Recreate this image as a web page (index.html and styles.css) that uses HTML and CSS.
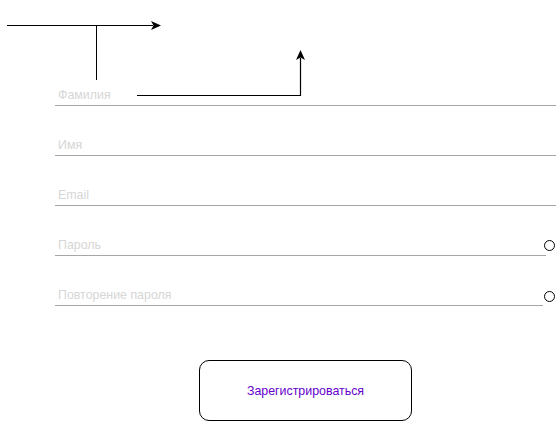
FILE: index.html
```html
<!DOCTYPE html>
<html lang="ru">
<head>
<meta charset="utf-8">
<title>Регистрация</title>
<link rel="stylesheet" href="styles.css">
</head>
<body>
<svg class="connectors" width="557" height="421" viewBox="0 0 557 421">
  <path d="M7 25.5 H153" stroke="#000" stroke-width="1.2" fill="none"/>
  <path d="M161 25.5 L151 21 L153.5 25.5 L151 30 Z" fill="#000"/>
  <path d="M96.5 25.5 V80" stroke="#000" stroke-width="1" fill="none"/>
  <path d="M137 95.5 H300.5 V58" stroke="#000" stroke-width="1.2" fill="none"/>
  <path d="M300.5 50 L296 60 L300.5 57.5 L305 60 Z" fill="#000"/>
</svg>
<form class="form">
  <div class="field"><span class="label">Фамилия</span></div>
  <div class="field"><span class="label">Имя</span></div>
  <div class="field"><span class="label">Email</span></div>
  <div class="row">
    <div class="field field-pass"><span class="label">Пароль</span></div>
    <span class="dot dot-1"></span>
  </div>
  <div class="row">
    <div class="field field-repeat"><span class="label">Повторение пароля</span></div>
    <span class="dot dot-2"></span>
  </div>
  <div class="actions">
    <button type="button" class="btn">Зарегистрироваться</button>
  </div>
</form>
</body>
</html>
```
FILE: styles.css
```css
html, body {
  margin: 0;
  padding: 0;
  background: #fff;
  font-family: "Liberation Sans", Arial, sans-serif;
}
body {
  width: 557px;
  height: 421px;
  position: relative;
  overflow: hidden;
}
.connectors {
  position: absolute;
  left: 0;
  top: 0;
  pointer-events: none;
}
.form {
  padding-top: 56px;
  padding-left: 55px;
  display: flex;
  flex-direction: column;
}
.field {
  width: 501px;
  height: 49px;
  border-bottom: 1px solid #a6a6a6;
  display: flex;
  align-items: flex-end;
  box-sizing: content-box;
}
.label {
  font-size: 12.4px;
  line-height: 14px;
  color: #d6d6d6;
  padding-left: 3px;
  padding-bottom: 3px;
}
.row {
  display: flex;
  align-items: flex-end;
}
.field-pass {
  width: 491px;
}
.field-repeat {
  width: 488px;
}
.dot {
  width: 11px;
  height: 11px;
  border: 1px solid #000;
  border-radius: 50%;
  box-sizing: border-box;
  flex: none;
}
.dot-1 {
  margin-left: -2px;
  margin-bottom: 5px;
}
.dot-2 {
  margin-left: 1px;
  margin-bottom: 4px;
}
.actions {
  padding-top: 54px;
  padding-left: 144px;
}
.btn {
  width: 213px;
  height: 61px;
  border: 1px solid #000;
  border-radius: 10px;
  background: #fff;
  font-family: "Liberation Sans", Arial, sans-serif;
  font-size: 12.4px;
  color: #6600cc;
  padding: 0;
}
```
